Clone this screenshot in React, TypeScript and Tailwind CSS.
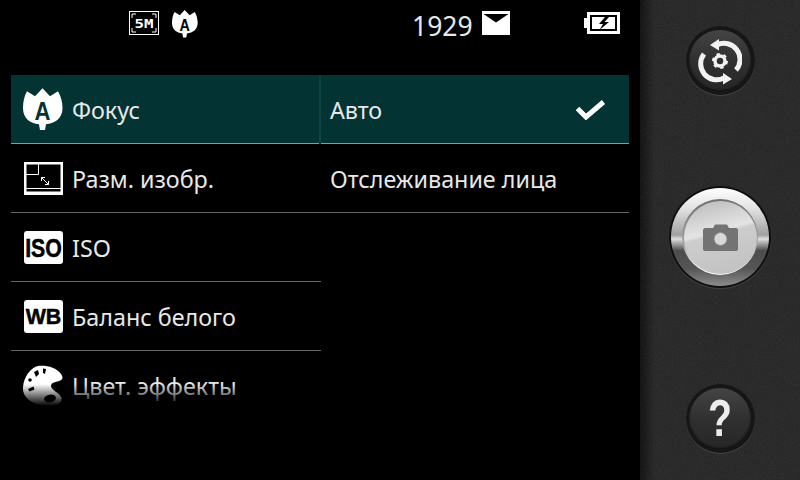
const FONT = "font-['Droid_Sans','Noto_Sans','Open_Sans',sans-serif]";

function Tulip({ size, hole }: { size: number; hole: string }) {
  return (
    <svg width={size} height={size * 1.06} viewBox="0 0 40 42" className="block">
      <path
        d="M4 3 L12 8 L19.500 0 L27 8 L35 3 C38 8 39.500 14 39.500 20 C39.500 30 32 35 23 36 L22 42 L17 42 L16 36 C7 35 0 30 0 20 C0 14 1 8 4 3Z"
        fill="#fff"
      />
      <g transform="translate(19.500 32) scale(0.85 1)">
        <text x="0" y="0" textAnchor="middle" fontFamily="Liberation Sans" fontWeight="700" fontSize="26" fill={hole}>A</text>
      </g>
    </svg>
  );
}

function SizeIcon() {
  return (
    <svg width="39" height="33" viewBox="0 0 39 33" className="block">
      <rect x="1.250" y="1.250" width="36.500" height="30.500" fill="none" stroke="#fff" strokeWidth="2.500" />
      <rect x="0" y="29.500" width="39" height="3.500" fill="#fff" />
      <path d="M2 12.500H14.500V2M2 26.500H37" fill="none" stroke="#fff" strokeWidth="1" />
      <path d="M17.500 15.500L24.500 22.500M17.500 15.500h3.500M17.500 15.500v3.500M24.500 22.500h-3.500M24.500 22.500v-3.500" fill="none" stroke="#fff" strokeWidth="1" />
    </svg>
  );
}

function LabelIcon({ label, scale, size, base }: { label: string; scale: number; size: number; base: number }) {
  return (
    <svg width="39" height="33" viewBox="0 0 39 33" className="block">
      <rect width="39" height="33" rx="3" fill="#fff" />
      <g transform={`translate(19.500 ${base}) scale(${scale} 1)`}>
        <text x="0" y="0" textAnchor="middle" fontFamily="Liberation Sans" fontWeight="700" fontSize={size} stroke="#000" strokeWidth="0.5" fill="#000">{label}</text>
      </g>
    </svg>
  );
}

function Palette() {
  return (
    <svg width="41" height="41" viewBox="0 0 41 41" className="block">
      <path
        d="M0 22 C1 12 7 3 15 1 C23 0 33 2 38 9 C41 13 39 15 36 16 C32 17 28 18 28 21 C28 25 37 28 38.500 33 C39 38 34 41 26 41 C12 41 -1 34 0 22Z"
        fill="#fff"
      />
      <g fill="#000">
        <path d="M11 7l4-2 1 4-3 3z" />
        <path d="M20 3.500l3 .5 -1 5 -2 -1z" />
        <circle cx="7" cy="15" r="1.800" />
        <path d="M5 24l5.500-2.500 1 3-5 2z" />
        <ellipse cx="27" cy="33.500" rx="6" ry="3.800" transform="rotate(-10 27 33.500)" />
      </g>
    </svg>
  );
}

function Row({ icon, label, active }: { icon?: React.ReactNode; label: string; active?: boolean }) {
  return (
    <div className={`flex h-[69px] items-center border-b ${active ? "border-b-[#7fa09b] bg-[#033332]" : "border-b-[#666]"}`}>
      <div className="flex w-[61px] shrink-0 pl-[13px]">{icon}</div>
      <span className="relative top-[2px] text-[23.300px] leading-none text-[#e8e8e8]">{label}</span>
    </div>
  );
}

function RoundButton({ children, className }: { children: React.ReactNode; className?: string }) {
  return (
    <div className={`flex h-[69px] w-[69px] items-center justify-center rounded-full bg-[#161616] shadow-[0_1px_0_#444] ${className ?? ""}`}>
      <div className="flex h-[62px] w-[62px] items-center justify-center rounded-full bg-gradient-to-b from-[#444] via-[#303030] to-[#262626] shadow-[inset_0_-2px_2px_#111]">
        {children}
      </div>
    </div>
  );
}

export default function App() {
  return (
    <div className={`relative flex h-[480px] w-[800px] overflow-hidden bg-black ${FONT}`}>
      <div className="relative w-[640px] shrink-0">
        <div className="flex h-[75px] items-start">
          <div className="ml-[129px] mt-[11px]">
            <svg width="30" height="24" viewBox="0 0 30 24" className="block">
              <rect x="0.500" y="0.500" width="29" height="23" fill="none" stroke="#fff" />
              <path d="M3 7V3H7M23 3H27V7M3 17V21H7M23 21H27V17" fill="none" stroke="#fff" />
              <text x="15" y="16.500" textAnchor="middle" textLength="19" lengthAdjust="spacingAndGlyphs" fontFamily="DejaVu Sans Mono" fontWeight="700" fontSize="12" fill="#fff">5M</text>
            </svg>
          </div>
          <div className="ml-[13px] mt-[10px]"><Tulip size={26} hole="#000" /></div>
          <span className="ml-[214px] mt-[11px] w-[59px] text-[26.500px] leading-[30px] text-[#e8e8e8]">1929</span>
          <div className="ml-[11px] mt-[11px]">
            <svg width="28" height="24" viewBox="0 0 28 24" className="block">
              <rect width="28" height="24" fill="#fff" />
              <path d="M1.500 3H26.500L14 11.500Z" fill="#000" />
            </svg>
          </div>
          <div className="ml-[74px] mt-[12px]">
            <svg width="36" height="22" viewBox="0 0 36 22" className="block">
              <rect x="0" y="6" width="4" height="10" fill="#fff" />
              <rect x="3" y="0" width="33" height="22" fill="#fff" />
              <rect x="6" y="3" width="27" height="16" fill="#000" />
              <rect x="8" y="5" width="23" height="12" fill="#fff" />
              <path d="M21 5 L15 12 H19 L15.500 18 L25 10 H20.500 L25 5Z" fill="#000" />
            </svg>
          </div>
        </div>

        <div className="ml-[11px] flex w-[618px]">
          <div className="w-[310px]">
            <div className="border-r-2 border-r-[#0a4341]">
              <Row active label="Фокус" icon={<div className="-ml-[1px]"><Tulip size={40} hole="#033332" /></div>} />
            </div>
            <Row label="Разм. изобр." icon={<SizeIcon />} />
            <Row label="ISO" icon={<LabelIcon label="ISO" scale={0.82} size={26} base={26} />} />
            <Row label="Баланс белого" icon={<LabelIcon label="WB" scale={0.93} size={23} base={24} />} />
            <div className="flex h-[69px] items-center">
              <div className="flex w-[61px] shrink-0 pl-[12px]"><Palette /></div>
              <span className="relative top-[1px] text-[23.300px] leading-none text-[#e8e8e8]">Цвет. эффекты</span>
            </div>
          </div>
          <div className="w-[308px]">
            <div className="flex h-[69px] items-center justify-between border-b border-b-[#7fa09b] bg-[#033332] pl-[9px] pr-[23px]">
              <span className="relative top-[2px] text-[23.300px] leading-none text-[#e8e8e8]">Авто</span>
              <svg width="31" height="21" viewBox="0 0 31 21" className="block">
                <path d="M2.500 9.500L11 18L28.500 3" fill="none" stroke="#fff" strokeWidth="5" />
              </svg>
            </div>
            <div className="flex h-[69px] items-center border-b border-b-[#666] pl-[9px]">
              <span className="relative top-[2px] text-[23.300px] leading-none text-[#e8e8e8]">Отслеживание лица</span>
            </div>
          </div>
        </div>

        <div className="absolute left-0 top-[384px] h-[22px] w-full bg-gradient-to-b from-transparent to-black" />
      </div>

      <div className="relative flex flex-1 flex-col items-center overflow-hidden bg-gradient-to-r from-[#0d0d0d] from-0% via-[#232323] via-9% to-[#232323] pt-[26px]">
        <svg className="pointer-events-none absolute inset-0 h-full w-full opacity-[0.1]">
          <filter id="noise"><feTurbulence type="fractalNoise" baseFrequency="0.9" numOctaves="2" /><feColorMatrix type="saturate" values="0" /></filter>
          <rect width="100%" height="100%" filter="url(#noise)" />
        </svg>

        <RoundButton className="relative">
          <svg width="44" height="48" viewBox="-22 -24 44 48" className="block">
            <g fill="none" stroke="#f2f2f2" strokeWidth="5">
              <path d="M-3 -16 A16 16 0 0 1 16 9" />
              <path d="M-16 -7 A16 16 0 0 0 4 17" />
            </g>
            <path d="M-10 -16L-1 -22V-10.500Z" fill="#f2f2f2" />
            <path d="M12 18L3 12V23.500Z" fill="#f2f2f2" />
            <g fill="none" stroke="#f2f2f2">
              <circle cx="0" cy="0" r="5" strokeWidth="3.500" />
              <circle cx="0" cy="0" r="7" strokeWidth="2" strokeDasharray="3.300 4" />
            </g>
          </svg>
        </RoundButton>

        <div className="relative mt-[91px] flex h-[102px] w-[102px] items-center justify-center rounded-full bg-[#0f0f0f] shadow-[0_1px_1px_#444]">
          <div className="flex h-[98px] w-[98px] items-center justify-center rounded-full bg-[linear-gradient(180deg,#ffffff_0%,#e0e0e0_22%,#a0a0a0_48%,#dedede_52%,#4c4c4c_64%,#555_82%,#8c8c8c_100%)]">
            <div className="flex h-[76px] w-[76px] items-center justify-center rounded-full bg-[linear-gradient(180deg,#707070_0%,#a5a5a5_60%,#fff_100%)]">
              <div className="flex h-[73px] w-[73px] items-center justify-center rounded-full bg-[linear-gradient(165deg,#b8b8b8_0%,#e4e4e4_42%,#cdcdcd_46%,#c0c0c0_100%)]">
                <svg width="35" height="29" viewBox="0 0 35 29" className="block">
                  <path d="M2 5H10L12 1.500H24L26 5H33C34 5 35 6 35 7V26C35 27 34 28 33 28H2C1 28 0 27 0 26V7C0 6 1 5 2 5Z" fill="#737373" />
                  <circle cx="17.500" cy="16" r="6.500" fill="#d8d8d8" stroke="#8a8a8a" />
                </svg>
              </div>
            </div>
          </div>
        </div>

        <RoundButton className="relative mt-[96px]">
          <span className="origin-center scale-x-[0.8] scale-y-[1.05] font-['Liberation_Sans',sans-serif] text-[49px] font-bold leading-none text-[#ececec]">?</span>
        </RoundButton>
      </div>
    </div>
  );
}
